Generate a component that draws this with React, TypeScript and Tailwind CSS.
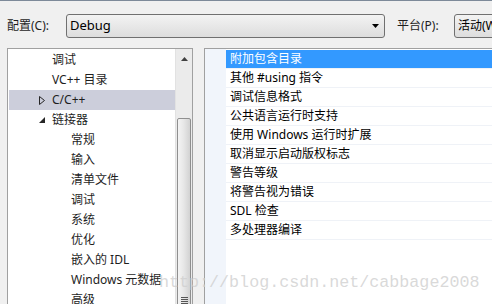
const font = { fontFamily: '"Noto Sans", "Noto Sans CJK SC", sans-serif' };

type Node = { label: string; level: 1 | 2; arrow?: "open" | "closed"; selected?: boolean };

const tree: Node[] = [
  { label: "调试", level: 1 },
  { label: "VC++ 目录", level: 1 },
  { label: "C/C++", level: 1, arrow: "closed", selected: true },
  { label: "链接器", level: 1, arrow: "open" },
  { label: "常规", level: 2 },
  { label: "输入", level: 2 },
  { label: "清单文件", level: 2 },
  { label: "调试", level: 2 },
  { label: "系统", level: 2 },
  { label: "优化", level: 2 },
  { label: "嵌入的 IDL", level: 2 },
  { label: "Windows 元数据", level: 2 },
  { label: "高级", level: 2 },
];

const props = [
  "附加包含目录",
  "其他 #using 指令",
  "调试信息格式",
  "公共语言运行时支持",
  "使用 Windows 运行时扩展",
  "取消显示启动版权标志",
  "警告等级",
  "将警告视为错误",
  "SDL 检查",
  "多处理器编译",
];

function ComboArrow() {
  return (
    <svg width="8" height="4" viewBox="0 0 8 4" className="shrink-0">
      <path d="M0 0h7L3.5 4z" fill="#000" />
    </svg>
  );
}

export default function App() {
  return (
    <div className="relative w-[492px] h-[304px] overflow-hidden bg-[#f0f0f0] border-t border-[#7d8a99]" style={font}>
      <div className="flex items-center pt-[13px] pl-[7px] text-[12px] text-[#1e1e1e]">
        <span className="w-[59px] shrink-0 whitespace-nowrap">配置(C):</span>
        <div className="w-[319px] shrink-0 h-[24px] flex items-center rounded-[3px] border border-[#707070] bg-gradient-to-b from-[#f3f3f3] to-[#dddddd] pl-[3px] pr-[4px]">
          <span className="flex-1 text-[13px] text-black">Debug</span>
          <ComboArrow />
        </div>
        <span className="ml-[12px] w-[57px] shrink-0 whitespace-nowrap">平台(P):</span>
        <div className="w-[100px] shrink-0 h-[24px] flex items-center rounded-[3px] border border-[#707070] bg-gradient-to-b from-[#f3f3f3] to-[#dddddd] pl-[3px] text-[12px] text-black">
          <span className="whitespace-nowrap">活动(Win32)</span>
        </div>
      </div>

      <div className="flex mt-[10px] pl-[7px] gap-[11px]">
        {/* tree */}
        <div className="w-[186px] h-[270px] shrink-0 flex border border-[#a0a0a0] bg-white">
          <div className="flex-1 pt-[1px] pl-[1px]">
            {tree.map((n, i) => (
              <div
                key={i}
                className={`h-[20px] flex items-center text-[12px] text-[#1e1e1e] ${n.selected ? "bg-[#cccedb]" : ""}`}
              >
                <div className={`${n.level === 1 ? "w-[43px]" : "w-[62px]"} shrink-0 flex justify-end pr-[7px]`}>
                  {n.arrow === "closed" && (
                    <svg width="6" height="9" viewBox="0 0 6 9">
                      <path d="M0.5 0.5L5.5 4.5L0.5 8.5z" fill="none" stroke="#262626" />
                    </svg>
                  )}
                  {n.arrow === "open" && (
                    <svg width="6" height="6" viewBox="0 0 6 6">
                      <path d="M6 0V6H0z" fill="#262626" />
                    </svg>
                  )}
                </div>
                <span className="whitespace-nowrap">{n.label}</span>
              </div>
            ))}
          </div>
          {/* scrollbar */}
          <div className="w-[17px] shrink-0 flex flex-col bg-[#ebebeb] border-l border-[#e2e2e2]">
            <div className="h-[17px] flex items-center justify-center mt-[1px]">
              <svg width="7" height="4" viewBox="0 0 7 4">
                <path d="M0 4h7L3.5 0z" fill="#404040" />
              </svg>
            </div>
            <div className="mt-[51px] mx-[1px] flex-1 rounded-[2px] border border-[#8f8f8f] bg-gradient-to-r from-[#f4f4f4] via-[#e6e6e6] to-[#d2d2d2] flex flex-col items-center justify-end pb-[12px]">
              <div className="flex flex-col gap-[1px]">
                <div className="w-[7px] h-[1px] bg-[#555]" />
                <div className="w-[7px] h-[1px] bg-[#555]" />
                <div className="w-[7px] h-[1px] bg-[#555]" />
                <div className="w-[7px] h-[1px] bg-[#555]" />
              </div>
            </div>
          </div>
        </div>

        {/* property grid */}
        <div className="flex-1 h-[270px] flex border border-[#a0a0a0] border-r-0 bg-white">
          <div className="w-[21px] shrink-0 bg-[#f1f5fb]" />
          <div className="flex-1 pt-[1px]">
            {props.map((p, i) => (
              <div
                key={p}
                className={`h-[19px] flex items-center pl-[4px] text-[12px] border-b border-[#eff2f7] ${
                  i === 0 ? "bg-[#3399ff] text-white border-[#3399ff]" : "text-black"
                }`}
              >
                <span className="whitespace-nowrap">{p}</span>
              </div>
            ))}
          </div>
        </div>
      </div>

      <div
        className="absolute left-[159px] top-[272px] text-[16.7px] leading-[20px] text-[#cfcfcf]/80 whitespace-nowrap pointer-events-none"
        style={{ fontFamily: '"Liberation Mono", monospace' }}
      >
        http://blog.csdn.net/cabbage2008
      </div>
    </div>
  );
}
